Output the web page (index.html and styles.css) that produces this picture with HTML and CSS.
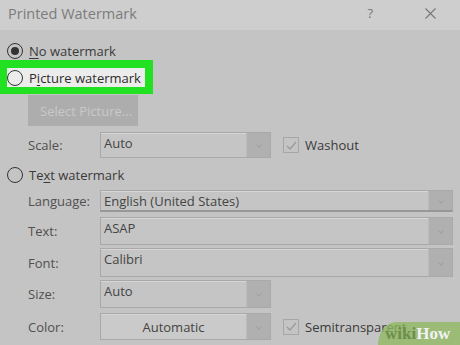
FILE: index.html
```html
<!DOCTYPE html>
<html lang="en">
  <head>
    <meta charset="UTF-8" />
    <meta name="viewport" content="width=device-width, initial-scale=1.0" />
    <title>Printed Watermark</title>
    <link rel="stylesheet" href="styles.css">
  </head>
  <body>
    <div class="dialog">
      <div class="titlebar">
        <span class="title">Printed Watermark</span>
        <span class="help">?</span>
        <svg class="close" width="11" height="11" viewBox="0 0 11 11">
          <path d="M0.5 0.5 L10.5 10.5 M10.5 0.5 L0.5 10.5" stroke="#777" stroke-width="1.1" fill="none" />
        </svg>
      </div>

      <div class="content">
        <div class="radio-row first">
          <span class="radio checked"></span>
          <span><u>N</u>o watermark</span>
        </div>

        <div class="highlight">
          <div class="radio-row inner">
            <span class="radio"></span>
            <span>P<u>i</u>cture watermark</span>
          </div>
        </div>

        <div class="select-picture">Select Picture...</div>

        <div class="field-row scale-row">
          <span class="label">Scale:</span>
          <div class="dropdown short">
            <span class="value">Auto</span>
            <span class="arrow"></span>
          </div>
          <div class="check">
            <span class="box">
              <svg width="13" height="13" viewBox="0 0 13 13">
                <path d="M2 7 L5 10 L11 3" stroke="#999" stroke-width="1.2" fill="none" />
              </svg>
            </span>
            <span>Washout</span>
          </div>
        </div>

        <div class="radio-row text-radio">
          <span class="radio"></span>
          <span>Te<u>x</u>t watermark</span>
        </div>

        <div class="field-row lang-row">
          <span class="label">Language:</span>
          <div class="dropdown wide lang">
            <span class="value">English (United States)</span>
            <span class="arrow"></span>
          </div>
        </div>

        <div class="field-row text-row">
          <span class="label">Text:</span>
          <div class="dropdown wide">
            <span class="value">ASAP</span>
            <span class="arrow"></span>
          </div>
        </div>

        <div class="field-row font-row">
          <span class="label">Font:</span>
          <div class="dropdown wide">
            <span class="value">Calibri</span>
            <span class="arrow"></span>
          </div>
        </div>

        <div class="field-row size-row">
          <span class="label">Size:</span>
          <div class="dropdown short">
            <span class="value">Auto</span>
            <span class="arrow"></span>
          </div>
        </div>

        <div class="field-row color-row">
          <span class="label">Color:</span>
          <div class="dropdown short color">
            <span class="value centered">Automatic</span>
            <span class="arrow"></span>
          </div>
          <div class="check">
            <span class="box">
              <svg width="13" height="13" viewBox="0 0 13 13">
                <path d="M2 7 L5 10 L11 3" stroke="#999" stroke-width="1.2" fill="none" />
              </svg>
            </span>
            <span>Semitransparent</span>
          </div>
        </div>
      </div>

      <div class="wikihow"><span class="wiki">wiki</span><span class="how">How</span></div>
    </div>
  </body>
</html>
```

FILE: styles.css
```css
body {
  margin: 0;
  font-family: "Open Sans", "Noto Sans", sans-serif;
  background-color: #c4c4c4;
}

.dialog {
  position: relative;
  width: 460px;
  height: 345px;
  overflow: hidden;
  background-color: #c4c4c4;
  color: #3a3a3a;
  font-size: 13px;
}

.titlebar {
  display: flex;
  align-items: center;
  height: 30px;
  padding-left: 8px;
  background-color: #cecece;
}

.title {
  flex: 1;
  font-size: 14.5px;
  color: #7c7c7c;
  margin-top: -4px;
}

.help {
  font-size: 13px;
  color: #777;
  margin-right: 52px;
  margin-top: -4px;
}

.close {
  margin-right: 24px;
  margin-top: -4px;
}

.content {
  display: flex;
  flex-direction: column;
}

.radio-row {
  display: flex;
  align-items: center;
  gap: 6px;
  height: 19px;
  padding-left: 7px;
}

.radio-row u {
  text-decoration-thickness: 1px;
  text-underline-offset: 2px;
}

.radio-row.first {
  margin-top: 11px;
}

.radio {
  box-sizing: border-box;
  width: 16px;
  height: 16px;
  border: 1.3px solid #333;
  border-radius: 50%;
  background-color: #c4c4c4;
  display: flex;
  align-items: center;
  justify-content: center;
}

.radio.checked::after {
  content: "";
  width: 8px;
  height: 8px;
  border-radius: 50%;
  background-color: #333;
}

.highlight {
  width: 153px;
  height: 34px;
  box-sizing: border-box;
  padding: 8px 8px 7px 7px;
  background-color: #22e022;
}

.radio-row.inner {
  width: 138px;
  padding-left: 0;
  background-color: #ececec;
  color: #2c2c2c;
}

.radio-row.inner .radio {
  background-color: #ececec;
}

.select-picture {
  margin: 1px 0 0 28px;
  width: 110px;
  height: 31px;
  box-sizing: border-box;
  padding-left: 12px;
  display: flex;
  align-items: center;
  background-color: #adadad;
  color: #c9c9c9;
}

.field-row {
  display: flex;
  align-items: center;
  padding-left: 28px;
}

.label {
  width: 72px;
  color: #505050;
}

.scale-row {
  margin-top: 6px;
  height: 26px;
}

.text-radio {
  margin-top: 7px;
  height: 20px;
}

.lang-row {
  margin-top: 5px;
  height: 22px;
}

.text-row {
  margin-top: 5px;
  height: 28px;
}

.font-row {
  margin-top: 3px;
  height: 29px;
}

.size-row {
  margin-top: 3px;
  height: 28px;
}

.color-row {
  margin-top: 5px;
  height: 27px;
}

.dropdown {
  display: flex;
  align-self: stretch;
  box-sizing: border-box;
  border: 1px solid #a9a9a9;
  box-shadow: inset 0 1px 0 #d6d6d6;
  background-color: #c5c5c5;
}

.dropdown.short {
  width: 171px;
}

.dropdown.wide {
  width: 353px;
}

.dropdown.lang {
  border-bottom: 2px solid #979797;
}

.dropdown.color {
  background-color: #cacaca;
}

.value {
  flex: 1;
  padding: 1px 0 0 3px;
  color: #444;
}

.value.centered {
  display: flex;
  align-items: center;
  justify-content: center;
  padding: 0;
}

.arrow {
  width: 23px;
  display: flex;
  align-items: center;
  justify-content: center;
  background-color: #b0b0b0;
  border-left: 1px solid #bcbcbc;
}

.arrow::after {
  content: "";
  width: 3px;
  height: 3px;
  border-right: 1px solid #a0a0a0;
  border-bottom: 1px solid #a0a0a0;
  transform: rotate(45deg);
}

.check {
  display: flex;
  align-items: center;
  gap: 6px;
  margin-left: 12px;
  color: #3a3a3a;
}

.check .box {
  box-sizing: border-box;
  width: 16px;
  height: 16px;
  border: 1px solid #a6a6a6;
  display: flex;
  align-items: center;
  justify-content: center;
}

.wikihow {
  position: absolute;
  right: 0;
  bottom: 0;
  width: 82px;
  height: 23px;
  padding-left: 7px;
  box-sizing: border-box;
  border-top-left-radius: 18px 23px;
  background-color: rgba(143, 184, 98, 0.78);
  font-family: "Liberation Serif", serif;
  font-weight: bold;
  font-size: 17px;
  line-height: 23px;
}

.wiki {
  color: #6c8f4c;
}

.how {
  color: #f2f2f2;
}
```
